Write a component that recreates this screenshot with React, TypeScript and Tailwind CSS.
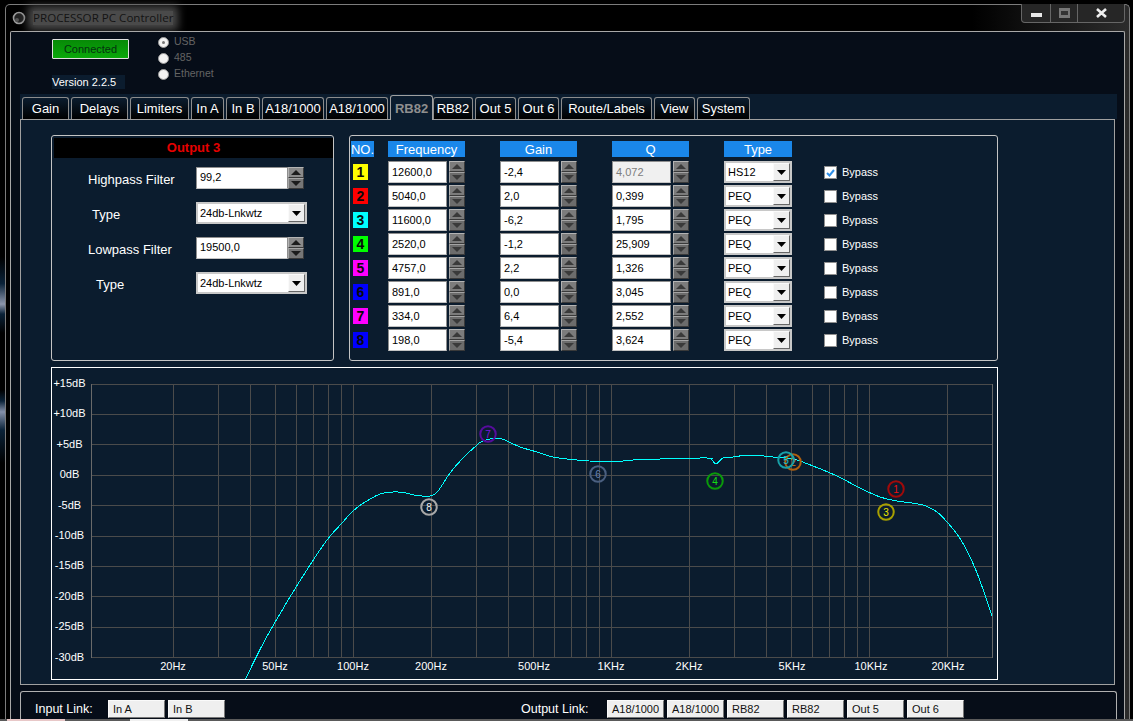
import React from "react";

const tabs = [
  { label: "Gain", width: "w-[47px]" },
  { label: "Delays", width: "w-[57px]" },
  { label: "Limiters", width: "w-[59px]" },
  { label: "In A", width: "w-[33px]" },
  { label: "In B", width: "w-[34px]" },
  { label: "A18/1000", width: "w-[62px]" },
  { label: "A18/1000", width: "w-[62px]" },
  { label: "RB82", width: "w-[43px]", active: true },
  { label: "RB82", width: "w-[40px]" },
  { label: "Out 5", width: "w-[41px]" },
  { label: "Out 6", width: "w-[41px]" },
  { label: "Route/Labels", width: "w-[91px]" },
  { label: "View", width: "w-[41px]" },
  { label: "System", width: "w-[53px]" },
];

const bands = [
  { no: "1", swatch: "bg-[#ffff00]", freq: "12600,0", gain: "-2,4", q: "4,072", type: "HS12", on: true },
  { no: "2", swatch: "bg-[#ff0000]", freq: "5040,0", gain: "2,0", q: "0,399", type: "PEQ" },
  { no: "3", swatch: "bg-[#00ffff]", freq: "11600,0", gain: "-6,2", q: "1,795", type: "PEQ" },
  { no: "4", swatch: "bg-[#00ff00]", freq: "2520,0", gain: "-1,2", q: "25,909", type: "PEQ" },
  { no: "5", swatch: "bg-[#ff00ff]", freq: "4757,0", gain: "2,2", q: "1,326", type: "PEQ" },
  { no: "6", swatch: "bg-[#0000ff]", freq: "891,0", gain: "0,0", q: "3,045", type: "PEQ" },
  { no: "7", swatch: "bg-[#ff00ff]", freq: "334,0", gain: "6,4", q: "2,552", type: "PEQ" },
  { no: "8", swatch: "bg-[#0000ff]", freq: "198,0", gain: "-5,4", q: "3,624", type: "PEQ" },
];

const peqGrid = "grid grid-cols-[37px_112px_112px_112px_100px_auto]";

function Spinner({ dark }: { dark?: boolean }) {
  const arrow = dark ? "#1c1c1c" : "#3a3a3a";
  return (
    <div className="flex h-[22px] w-[16px] shrink-0 flex-col">
      <div className={`flex h-[11px] items-center justify-center border border-[#b4b4b4] border-r-[#3a3a3a] border-b-[#3a3a3a] ${dark ? "bg-[#8a8a8a]" : "bg-[#7c7c7c]"}`}>
        <svg width="10" height="5" viewBox="0 0 10 5"><polygon points="5,0 10,5 0,5" fill={arrow} /></svg>
      </div>
      <div className={`flex h-[11px] items-center justify-center border border-[#a4a4a4] border-r-[#3a3a3a] border-b-[#3a3a3a] ${dark ? "bg-[#767676]" : "bg-[#6c6c6c]"}`}>
        <svg width="10" height="5" viewBox="0 0 10 5"><polygon points="0,0 10,0 5,5" fill={arrow} /></svg>
      </div>
    </div>
  );
}

function NumBox({ value, width, disabled, raised }: { value: string; width: string; disabled?: boolean; raised?: boolean }) {
  return (
    <div
      className={`flex h-[22px] items-center border border-[#8e8e8e] border-b-[#c4c4c4] pl-[3px] text-[11px] ${width} ${
        raised ? "pb-[2px]" : ""
      } ${disabled ? "bg-[#f0f0f0] text-[#7d7d7d]" : "bg-white text-black"}`}
    >
      {value}
    </div>
  );
}

function Select({ value, width }: { value: string; width: string }) {
  return (
    <div className={`flex h-[22px] items-center justify-between border-2 border-[#c8c8c8] bg-white pl-[2px] text-[11px] text-black ${width}`}>
      <span className="pt-[1px]">{value}</span>
      <div className="flex h-[18px] w-[17px] items-center justify-center border border-[#fafafa] border-r-[#666] border-b-[#666] bg-[#efefef]">
        <svg width="9" height="5" viewBox="0 0 9 5"><polygon points="0,0 9,0 4.5,5" fill="#000" /></svg>
      </div>
    </div>
  );
}

function OutputPanel() {
  return (
    <div className="relative h-[226px] w-[283px] shrink-0 rounded-[3px] border border-[#c4c4c4] p-[2px] pr-[1px]">
      <div className="flex h-[20px] w-[279px] items-center justify-center bg-black text-[13px] font-bold text-[#e60000]">Output 3</div>
      <div className="mt-[9px] flex h-[22px] items-center">
        <span className="ml-[34px] w-[108px] pt-[4px] text-[13px] text-white">Highpass Filter</span>
        <NumBox value="99,2" width="w-[92px]" raised />
        <Spinner dark />
      </div>
      <div className="mt-[13px] flex h-[22px] items-center">
        <span className="ml-[38px] w-[104px] pt-[3px] text-[13px] text-white">Type</span>
        <Select value="24db-Lnkwtz" width="w-[111px]" />
      </div>
      <div className="mt-[13px] flex h-[22px] items-center">
        <span className="ml-[34px] w-[108px] pt-[4px] text-[13px] text-white">Lowpass Filter</span>
        <NumBox value="19500,0" width="w-[92px]" raised />
        <Spinner dark />
      </div>
      <div className="mt-[13px] flex h-[22px] items-center">
        <span className="ml-[42px] w-[100px] pt-[3px] text-[13px] text-white">Type</span>
        <Select value="24db-Lnkwtz" width="w-[111px]" />
      </div>
    </div>
  );
}

function Header({ label, width }: { label: string; width: string }) {
  return <div className={`flex h-[16px] items-center justify-center bg-[#1a87ea] pt-[1px] text-[13px] text-white ${width}`}>{label}</div>;
}

function PeqPanel() {
  return (
    <div className="h-[226px] w-[649px] shrink-0 rounded-[3px] border border-[#c4c4c4] pl-[1px] pt-[5px]">
      <div className={`${peqGrid} mb-[4px]`}>
        <Header label="NO." width="w-[23px]" />
        <Header label="Frequency" width="w-[77px]" />
        <Header label="Gain" width="w-[77px]" />
        <Header label="Q" width="w-[77px]" />
        <Header label="Type" width="w-[68px]" />
      </div>
      <div className="flex flex-col gap-[2px]">
        {bands.map((b) => (
          <div key={b.no} className={`${peqGrid} h-[22px] items-center`}>
            <div className={`ml-[2px] flex h-[16px] w-[15px] items-center justify-center text-[14px] font-bold text-[#0a0a0a] ${b.swatch}`}>{b.no}</div>
            <div className="flex gap-[2px]">
              <NumBox value={b.freq} width="w-[59px]" />
              <Spinner />
            </div>
            <div className="flex gap-[2px]">
              <NumBox value={b.gain} width="w-[59px]" />
              <Spinner />
            </div>
            <div className="flex gap-[2px]">
              <NumBox value={b.q} width="w-[59px]" disabled={b.on} />
              <Spinner />
            </div>
            <Select value={b.type} width="w-[68px]" />
            <div className="flex items-center gap-[5px] pt-[1px]">
              <div className="flex h-[13px] w-[13px] items-center justify-center border border-[#8e8e8e] bg-white">
                {b.on && (
                  <svg width="9" height="8" viewBox="0 0 9 8">
                    <path d="M1 4 L3.5 6.5 L8 1" fill="none" stroke="#2f8fe8" strokeWidth="2" />
                  </svg>
                )}
              </div>
              <span className="text-[11px] text-white">Bypass</span>
            </div>
          </div>
        ))}
      </div>
    </div>
  );
}

const freqX = (f: number) => 173 + 258 * Math.log10(f / 20);
const gridFreqs = [
  20, 30, 40, 50, 60, 70, 80, 90, 100, 200, 300, 400, 500, 600, 700, 800, 900, 1000, 2000, 3000, 4000, 5000, 6000,
  7000, 8000, 9000, 10000, 20000,
];
const dbLabels = ["+15dB", "+10dB", "+5dB", "0dB", "-5dB", "-10dB", "-15dB", "-20dB", "-25dB", "-30dB"];
const hzLabels = [
  ["20Hz", 173],
  ["50Hz", 275],
  ["100Hz", 353],
  ["200Hz", 431],
  ["500Hz", 534],
  ["1KHz", 611],
  ["2KHz", 689],
  ["5KHz", 792],
  ["10KHz", 871],
  ["20KHz", 948],
] as const;

const curve: [number, number][] = [
  [245, 680], [265, 640], [290, 597], [310, 565], [327, 540], [342, 523], [352, 512], [362, 504], [380, 494],
  [393, 492], [403, 492.5], [417, 495.5], [430, 496], [438, 491], [450, 473], [463, 458], [477, 445], [483, 441],
  [497, 438], [507, 441], [520, 447], [537, 452], [553, 457], [577, 460], [610, 462], [633, 460], [660, 459],
  [707, 458], [712, 460], [716, 464], [723, 458], [733, 457], [750, 455], [773, 457], [793, 459], [813, 466],
  [837, 476], [860, 488], [880, 497], [897, 501], [923, 505], [937, 512], [947, 522], [961, 540], [975, 568],
  [985, 595], [992, 616],
];

// catmull-rom so the response line doesn't look polygonal
function smooth(pts: [number, number][]) {
  let d = `M${pts[0][0]} ${pts[0][1]}`;
  for (let i = 0; i < pts.length - 1; i++) {
    const p0 = pts[Math.max(i - 1, 0)];
    const p1 = pts[i];
    const p2 = pts[i + 1];
    const p3 = pts[Math.min(i + 2, pts.length - 1)];
    const c1x = p1[0] + (p2[0] - p0[0]) / 6;
    const c1y = p1[1] + (p2[1] - p0[1]) / 6;
    const c2x = p2[0] - (p3[0] - p1[0]) / 6;
    const c2y = p2[1] - (p3[1] - p1[1]) / 6;
    d += ` C${c1x} ${c1y} ${c2x} ${c2y} ${p2[0]} ${p2[1]}`;
  }
  return d;
}

const markers = [
  { n: "8", x: 429, y: 507, ring: "#a8a8a8", text: "#f0f0f0" },
  { n: "7", x: 488, y: 434, ring: "#560c9c", text: "#7a16e0" },
  { n: "6", x: 598, y: 474, ring: "#4a5f80", text: "#6480b0" },
  { n: "4", x: 715, y: 481, ring: "#0a9a0a", text: "#10e010" },
  { n: "2", x: 793, y: 462, ring: "#b0600f", text: "#e07a10" },
  { n: "5", x: 786, y: 460, ring: "#18a0a8", text: "#20c8d0" },
  { n: "1", x: 896, y: 489, ring: "#a00a0a", text: "#f01010" },
  { n: "3", x: 886, y: 512, ring: "#a8a000", text: "#f0e800" },
];

function Chart() {
  return (
    <div className="mt-[6px] h-[313px] w-[947px] border border-white">
      <svg width="945" height="311" viewBox="52 368 945 311" className="block">
        <g stroke="#4b4b4b" strokeWidth="1" shapeRendering="crispEdges">
          {gridFreqs.map((f) => (
            <line key={f} x1={freqX(f)} x2={freqX(f)} y1={383.5} y2={657.5} />
          ))}
          {dbLabels.map((l, i) => (
            <line key={l} x1={91.5} x2={992.5} y1={Math.round(383.5 + i * 30.4) + 0.5} y2={Math.round(383.5 + i * 30.4) + 0.5} />
          ))}
          <line x1={91.5} x2={91.5} y1={383.5} y2={657.5} stroke="#6a6a6a" />
          <line x1={992.5} x2={992.5} y1={383.5} y2={657.5} stroke="#6a6a6a" />
        </g>
        <g fontSize="11" fill="#fff" textAnchor="middle">
          {dbLabels.map((l, i) => (
            <text key={l} x={69.5} y={387 + i * 30.4}>{l}</text>
          ))}
          {hzLabels.map(([l, x]) => (
            <text key={l} x={x} y={670}>{l}</text>
          ))}
        </g>
        <path d={smooth(curve)} fill="none" stroke="#00ffff" strokeWidth="1" shapeRendering="crispEdges" />
        {markers.map((m) => (
          <g key={m.n} textAnchor="middle">
            <circle cx={m.x} cy={m.y} r={7.75} fill="none" stroke={m.ring} strokeWidth="2" />
            <text x={m.x} y={m.y + 3.5} fontSize="10" fill={m.text}>{m.n}</text>
          </g>
        ))}
      </svg>
    </div>
  );
}

function LinkButton({ label }: { label: string }) {
  return (
    <div className="flex h-[18px] w-[57px] items-center overflow-hidden border border-[#fafafa] border-r-[#777] border-b-[#777] bg-[#efefef] pl-[4px] text-[11px] whitespace-nowrap text-[#111]">
      {label}
    </div>
  );
}

function Radio({ label, checked }: { label: string; checked?: boolean }) {
  return (
    <div className="flex h-[16px] items-center gap-[5px]">
      <div className="flex h-[11px] w-[11px] items-center justify-center rounded-full border border-[#9a9a9a] bg-[#f2f2f2]">
        {checked && <div className="h-[3px] w-[3px] rounded-full bg-[#777]" />}
      </div>
      <span className="text-[10.5px] text-[#646464]">{label}</span>
    </div>
  );
}

function TitleBar() {
  return (
    <div className="flex h-[26px] shrink-0 items-start justify-between">
      <div className="flex items-center pl-[2px] pt-[6px]">
        <svg width="14" height="14" viewBox="0 0 14 14">
          <circle cx="7" cy="7" r="5.5" fill="#222" stroke="#9a9a9a" strokeWidth="1.6" />
          <circle cx="5" cy="9" r="2" fill="#555" />
        </svg>
        <span className="ml-[7px] bg-[#4a4a4a] font-['Open_Sans',sans-serif] text-[11.6px] leading-[14px] text-[#141414] shadow-[0_0_8px_5px_#4a4a4a]">
          PROCESSOR PC Controller
        </span>
      </div>
      <div className="-mt-[1px] flex h-[19px] w-[104px] rounded-b-[4px] border border-t-0 border-[#666] bg-[#262626]">
        <div className="flex w-[29px] items-center justify-center border-r border-[#666]">
          <div className="mt-[4px] h-[4px] w-[11px] bg-[#e8e8e8]" />
        </div>
        <div className="flex w-[27px] items-center justify-center border-r border-[#666]">
          <div className="flex h-[10px] w-[11px] items-center justify-center bg-[#777]">
            <div className="h-[4px] w-[7px] bg-[#333]" />
          </div>
        </div>
        <div className="flex flex-1 items-center justify-center">
          <svg width="11" height="10" viewBox="0 0 11 10">
            <path d="M1 1 L10 9 M10 1 L1 9" stroke="#eee" strokeWidth="2.6" />
          </svg>
        </div>
      </div>
    </div>
  );
}

export default function App() {
  return (
    <div className="relative flex h-[721px] w-[1133px] flex-col overflow-hidden bg-black font-['Liberation_Sans',Arial,sans-serif]">
      {/* wallpaper peeking out left of the window */}
      <div className="absolute top-[257px] left-0 h-[76px] w-[5px] bg-[linear-gradient(180deg,#000,#0a2238_35%,#8d97ad_62%,#0a2238_75%,#000)]" />
      <div className="absolute top-[390px] left-0 h-[73px] w-[5px] bg-[linear-gradient(180deg,#000,#0a2238_15%,#8490aa_30%,#0a2238_55%,#000)]" />

      <div className="mt-[4px] ml-[5px] flex h-[715px] w-[1125px] flex-col rounded-t-[5px] border border-b-0 border-[#7c7c7c] bg-[linear-gradient(90deg,#000_86%,#2c2c2c)] px-[4px]">
        <TitleBar />
        <div className="flex min-h-0 flex-1 flex-col rounded-t-[2px] border border-b-0 border-[#a8a8a8] bg-[#060d18]">
          <div className="flex h-[62px] shrink-0 pl-[41px]">
            <div className="w-[77px]">
              <div className="mt-[7px] flex h-[20px] items-center justify-center rounded-[1px] border border-[#e0e0e0] bg-[linear-gradient(180deg,#078a07,#0aa80a)] text-[11px] text-[#053010]">
                Connected
              </div>
              <div className="mt-[16px] flex h-[14px] w-[73px] items-center bg-[#0b1c2e] text-[11px] text-white">Version 2.2.5</div>
            </div>
            <div className="mt-[2px] ml-[29px]">
              <Radio label="USB" checked />
              <Radio label="485" />
              <Radio label="Ethernet" />
            </div>
          </div>

          <div className="ml-[9px] flex h-[25px] w-[1097px] shrink-0 items-end gap-[2px] bg-[#0b1c2e] pl-[2px]">
            {tabs.map((t, i) =>
              t.active ? (
                <div
                  key={i}
                  className={`relative z-10 -mr-[2px] -mb-[1px] flex h-[25px] items-start justify-center rounded-t-[3px] border border-b-0 border-[#a0a0a0] bg-[#0b1c2e] pt-[3px] text-[13px] font-bold text-[#8f8f8f] ${t.width}`}
                >
                  {t.label}
                </div>
              ) : (
                <div
                  key={i}
                  className={`flex h-[22px] items-center justify-center rounded-t-[3px] border border-b-0 border-[#8c8c8c] bg-[linear-gradient(180deg,#0b1c2e,#000)] text-[13px] text-white ${t.width}`}
                >
                  {t.label}
                </div>
              ),
            )}
          </div>

          <div className="ml-[9px] h-[566px] w-[1095px] shrink-0 border border-[#a0a0a0] bg-[#0b1c2e] pt-[15px] pl-[30px]">
            <div className="flex gap-[15px]">
              <OutputPanel />
              <PeqPanel />
            </div>
            <Chart />
          </div>

          <div className="mt-[6px] ml-[9px] flex min-h-0 w-[1097px] flex-1 items-start rounded-t-[3px] border border-b-0 border-[#b0b0b0] pt-[8px] pl-[14px]">
            <span className="w-[73px] text-[12.5px] leading-[18px] text-white">Input Link:</span>
            <div className="flex gap-[3px]">
              <LinkButton label="In A" />
              <LinkButton label="In B" />
            </div>
            <span className="ml-[296px] w-[86px] text-[12.5px] leading-[18px] text-white">Output Link:</span>
            <div className="flex gap-[3px]">
              <LinkButton label="A18/1000" />
              <LinkButton label="A18/1000" />
              <LinkButton label="RB82" />
              <LinkButton label="RB82" />
              <LinkButton label="Out 5" />
              <LinkButton label="Out 6" />
            </div>
          </div>
        </div>
      </div>

      {/* sliver of the desktop taskbar */}
      <div className="flex h-[2px] shrink-0 bg-[#5a5a5a]">
        <div className="ml-[7px] w-[58px] bg-[#e8c8c8]" />
        <div className="ml-[65px] w-[58px] bg-[#f0f0f0]" />
      </div>
    </div>
  );
}
